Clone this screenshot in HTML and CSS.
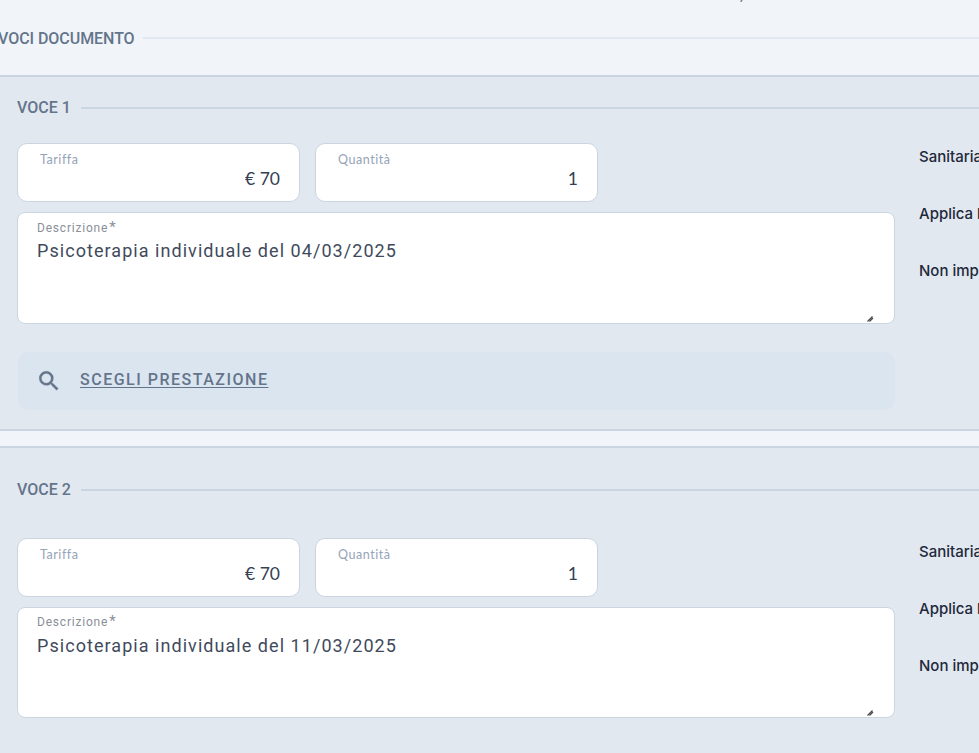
FILE: index.html
```html
<!DOCTYPE html>
<html lang="it">
<head>
<meta charset="utf-8">
<title>Voci documento</title>
<link rel="stylesheet" href="styles.css">
</head>
<body>
<main class="page">
  <p class="clipped-line"><span>,</span></p>
  <div class="section-title main-title"><span>VOCI DOCUMENTO</span><i></i></div>

  <section class="voce first">
    <div class="section-title voce-title"><span>VOCE 1</span><i></i></div>
    <div class="voce-body">
      <div class="fields">
        <div class="row">
          <div class="field"><label>Tariffa</label><output>€ 70</output></div>
          <div class="field"><label>Quantità</label><output>1</output></div>
        </div>
        <div class="area">
          <label>Descrizione<sup>*</sup></label>
          <p>Psicoterapia individuale del 04/03/2025</p>
          <svg class="grip" width="7" height="7" viewBox="0 0 7 7"><path d="M0.5 6.5 5.5 1.5M2.5 6.5 6 3" stroke="#4b4b4b" stroke-width="1.2" fill="none"/></svg>
        </div>
        <div class="choose">
          <svg width="26" height="26" viewBox="0 0 24 24"><path fill="#64748b" stroke="#64748b" stroke-width=".35" d="M15.5 14h-.79l-.28-.27A6.47 6.47 0 0 0 16 9.5 6.5 6.5 0 1 0 9.5 16c1.61 0 3.09-.59 4.23-1.57l.27.28v.79l5 4.99L20.49 19l-4.99-5zm-6 0C7.01 14 5 11.99 5 9.5S7.01 5 9.5 5 14 7.01 14 9.5 11.99 14 9.5 14z"/></svg>
          <a>SCEGLI PRESTAZIONE</a>
        </div>
      </div>
      <ul class="options">
        <li>Sanitaria</li>
        <li>Applica bollo</li>
        <li>Non imponibile</li>
      </ul>
    </div>
  </section>

  <section class="voce second">
    <div class="section-title voce-title"><span>VOCE 2</span><i></i></div>
    <div class="voce-body">
      <div class="fields">
        <div class="row">
          <div class="field"><label>Tariffa</label><output>€ 70</output></div>
          <div class="field"><label>Quantità</label><output>1</output></div>
        </div>
        <div class="area">
          <label>Descrizione<sup>*</sup></label>
          <p>Psicoterapia individuale del 11/03/2025</p>
          <svg class="grip" width="7" height="7" viewBox="0 0 7 7"><path d="M0.5 6.5 5.5 1.5M2.5 6.5 6 3" stroke="#4b4b4b" stroke-width="1.2" fill="none"/></svg>
        </div>
      </div>
      <ul class="options">
        <li>Sanitaria</li>
        <li>Applica bollo</li>
        <li>Non imponibile</li>
      </ul>
    </div>
  </section>
</main>
</body>
</html>
```
FILE: styles.css
```css
* { box-sizing: border-box; }
html, body { margin: 0; padding: 0; height: 100%; overflow: hidden; background: #f1f5f9; }
.page { display: flex; flex-direction: column; height: 753px; overflow: hidden; font-family: "Roboto", sans-serif; }
.clipped-line { flex: none; height: 2px; margin: 0; padding-left: 740px; overflow: hidden; font-size: 16px; line-height: 0; color: #64748b; }
.clipped-line span { display: block; margin-top: -5px; }
.section-title { display: flex; align-items: center; font-size: 16px; font-weight: 500; color: #64748b; white-space: nowrap; }
.section-title i { flex: 1; height: 2px; display: block; }
.main-title { flex: none; height: 73px; margin-left: -2px; padding-bottom: 1px; gap: 8px; letter-spacing: -.05px; }
.main-title i { background: #e2e8f0; }
.voce-title { padding-left: 17px; line-height: 20px; gap: 10px; }
.voce-title i { background: #cbd5e1; }
.voce { background: #e2e8f0; border-top: 2px solid #cbd5e1; }
.first { flex: none; height: 356px; padding-top: 21px; border-bottom: 2px solid #cbd5e1; }
.second { flex: 1; margin-top: 15px; padding-top: 32px; }
.voce-body { display: flex; padding-left: 17px; gap: 24px; }
.first .voce-body { margin-top: 25px; }
.second .voce-body { margin-top: 38px; }
.fields { width: 878px; flex: none; }
.row { display: flex; gap: 15px; }
.field { position: relative; width: 283px; height: 59px; background: #fff; border: 1px solid #cbd5e1; border-radius: 10px; font-family: "Lato", sans-serif; }
.field label { position: absolute; left: 22px; top: 8px; font-size: 12.5px; line-height: 15px; color: #94a3b8; letter-spacing: .55px; }
.field output { position: absolute; right: 19px; top: 25px; font-size: 17.5px; line-height: 20px; color: #334155; }
.area { position: relative; height: 112px; margin-top: 10px; padding: 8px 19px; background: #fff; border: 1px solid #cbd5e1; border-radius: 8px; }
.second .area { height: 111px; padding-top: 7px; }
.area label { display: block; height: 14px; font-size: 12px; line-height: 14px; letter-spacing: .8px; color: #8a8f98; }
.area sup { font-size: 15px; line-height: 0; vertical-align: baseline; margin-left: 1px; }
.area p { margin: 4px 0 0; font-size: 18px; line-height: 24px; letter-spacing: 1.05px; color: #3f4a5c; }
.second .area p { margin-top: 5px; }
.grip { position: absolute; right: 20px; bottom: 1px; }
.choose { display: flex; align-items: center; gap: 18px; height: 58px; margin: 28px 0 0 1px; padding-left: 18px; background: #dbe5f0; border-radius: 10px; }
.choose a { margin-bottom: 3px; font-size: 16px; font-weight: 500; letter-spacing: 1.5px; color: #64748b; text-decoration: underline; text-underline-offset: 2px; }
.options { list-style: none; margin: 0; padding: 0; font-family: "Inter", sans-serif; font-size: 15px; font-weight: 500; color: #1e293b; white-space: nowrap; }
.options li { height: 57.2px; line-height: 28px; }
```
